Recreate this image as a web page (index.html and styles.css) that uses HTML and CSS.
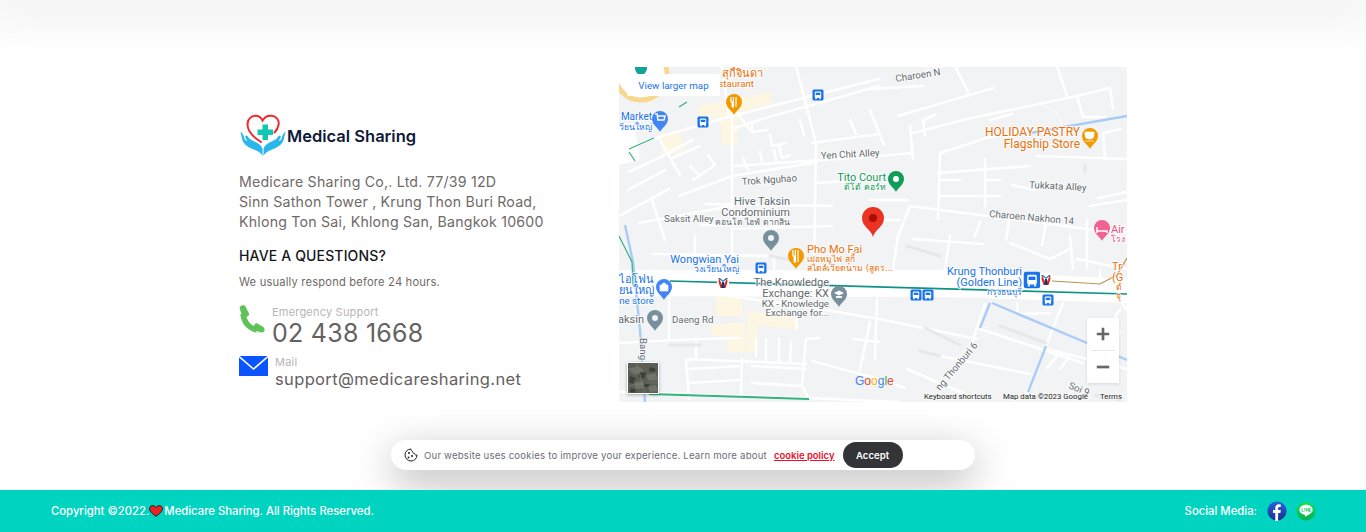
FILE: index.html
```html
<!DOCTYPE html>
<html lang="en">
<head>
<meta charset="utf-8">
<title>Medical Sharing</title>
<link rel="stylesheet" href="styles.css">
</head>
<body>
<div class="top-shadow"></div>
<main class="contact">
  <section class="info">
    <div class="brand">
      <svg class="brand-logo" viewBox="0 0 48 46" aria-hidden="true">
        <path d="M22 30C14 25 8.500 19 8.500 12.500 8.500 7 12 3.800 16.500 3.800c3 0 5.500 1.700 7 4.700 2-3.200 5-5.200 9-4.700 5 .6 8 4.200 7 9.200-.5 3-2 5.500-4 7.500" fill="none" stroke="#ee2a2f" stroke-width="2" stroke-linecap="round"/>
        <path d="M23.500 12.500h5.500v5h5v5.500h-5v5h-5.500v-5h-5v-5.500h5z" fill="#12c6b4"/>
        <path d="M1.500 20l1.500 6.500c1 5 5 8 9.500 10 5 2 9 3.500 11 7.500v-7c-1-4-5-6-9-8-3-1-5-3-6-5-1-1.500-3 0-2 2l2 3-2.500-1c-1-3-1.500-6-4.500-8.500z" fill="#29b6ea"/>
        <path d="M46.500 20l-1.500 6.500c-1 5-5 8-9.500 10-5 2-9 3.500-11 7.500v-7c1-4 5-6 9-8 3-1 5-3 6-5 1-1.500 3 0 2 2l-2 3 2.500-1c1-3 1.500-6 4.500-8.500z" fill="#29b6ea"/>
      </svg>
      <span class="brand-name">Medical Sharing</span>
    </div>
    <p class="address">Medicare Sharing Co,. Ltd. 77/39 12D<br>Sinn Sathon Tower , Krung Thon Buri Road,<br>Khlong Ton Sai, Khlong San, Bangkok 10600</p>
    <h2 class="question">HAVE A QUESTIONS?</h2>
    <p class="respond">We usually respond before 24 hours.</p>
    <div class="contact-row phone-row">
      <svg class="phone-icon" viewBox="0 0 26 28" aria-hidden="true">
        <path d="M4 9C5 17 10 23 18 25" fill="none" stroke="#5fc258" stroke-width="5.500"/>
        <path d="M1 4c-1-1.500 0-3 2-3.500 1.500-.5 3-.5 3.500 1l3.500 7c.5 1.500-.5 2.500-2 3l-3 1.500C3 11 1.500 7 1 4z" fill="#5fc258"/>
        <path d="M23.500 27.500c1.500-.5 2.500-2 2-3.500-.3-1.200-1-2-2-2.500l-5-3c-1.500-.7-2.500 0-3 1.500l-1.500 3.500c3 2.500 6 4 9.500 4z" fill="#5fc258"/>
      </svg>
      <div class="contact-text">
        <div class="contact-label">Emergency Support</div>
        <div class="contact-phone">02 438 1668</div>
      </div>
    </div>
    <div class="contact-row mail-row">
      <svg class="mail-icon" viewBox="0 0 29 20" aria-hidden="true">
        <rect width="29" height="20" fill="#0a55ff"/>
        <path d="M0 .5L14.500 13 29 .5" fill="none" stroke="#fff" stroke-width="1.600"/>
      </svg>
      <div class="contact-text">
        <div class="contact-label">Mail</div>
        <div class="contact-mail">support@medicaresharing.net</div>
      </div>
    </div>
  </section>

  <div class="map">
    <svg class="map-canvas" viewBox="619 67 508 335" aria-label="Map">
      <defs>
        <path id="pin" d="M0 0C-1.500-4-8-7-8-13a8 8 0 0 1 16 0C8-7 1.500-4 0 0Z"/>
        <g id="bus">
          <rect x="-5.500" y="-5.500" width="11" height="11" rx="1.500" fill="#1a73e8"/>
          <rect x="-3.200" y="-3.500" width="6.400" height="6.500" rx="1" fill="#fff"/>
          <rect x="-2.300" y="-2.300" width="4.600" height="2.300" fill="#1a73e8"/>
          <rect x="-2.800" y="3" width="1.500" height="1.200" fill="#fff"/>
          <rect x="1.300" y="3" width="1.500" height="1.200" fill="#fff"/>
        </g>
        <g id="metro">
          <rect x="-6" y="-6" width="12" height="12" fill="#fff"/>
          <path d="M-5-4L0 0 5-4 3-4 0-1.500-3-4Z" fill="#1f7dc4"/>
          <path d="M-4-4.500L-1 3-1 6-2.500 6-4.500 0ZM4-4.500L1 3 1 6 2.500 6 4.500 0Z" fill="#d93025"/>
          <path d="M-1 0L1 0 1.500 6-1.500 6Z" fill="#16356b"/>
        </g>
      </defs>
      <rect x="619" y="67" width="508" height="335" fill="#f1f3f4"/>

      <g fill="#fdf6e3">
        <path d="M697 106L770 92 773 103 739 112 737 146 722 144 720 116 700 122Z"/>
        <path d="M658 138L680 132 686 150 664 156Z"/>
        <path d="M716 296H742V316H716ZM712 324H727V336H712ZM727 323H745V352H727Z"/>
        <path d="M747 311L796 316 796 329 758 326 757 352 746 352Z"/>
      </g>
      <circle cx="641" cy="74" r="27" fill="#fff"/>
      <circle cx="641" cy="74" r="26" fill="none" stroke="#f8d88e" stroke-width="5"/>
      <path d="M619 123H634L640 160 619 165Z" fill="#fff"/>

      <path d="M619 270H950L1127 279V303L950 297 619 296Z" fill="#fff"/>

      <g class="road">
        <path d="M619 152L662 136 732 116 819 94 879 79M732 129L772 116 819 103 879 86M732 109V270M796 66L816 143 814 270"/>
        <path d="M722 67L729 116M737 113L750 130M629 172L665 155 692 140M628 190L665 170M660 140L680 175M679 196L732 176 812 163M735 166L879 156 913 153"/>
        <path d="M619 216L669 189M639 223L732 206M706 204L832 206M732 229L832 226M812 143L879 134M779 146L782 158 790 155M816 183L879 179M672 158L700 146M693 180L715 165 708 155"/>
        <path d="M752 122L752 132 768 130M770 135L772 146 786 143M800 120L804 135M700 176L690 166M748 170L743 158M762 162L760 152M776 160L774 150M652 200L665 240M700 225H732M780 214V226M652 254L772 256M774 256V269M695 236V254"/>
        <path d="M870 89L923 86M898 116L993 88M913 133L967 119 1077 96 1110 88M910 126L913 159M925 135L923 120 935 115M955 66L968 92M870 110L884 145M850 120L856 134"/>
        <path d="M940 153L987 138 1030 129M940 153L938 219M938 173L1030 166M985 159V206M940 180H960M940 196H1000M985 180H1000M990 120L1012 114"/>
        <path d="M910 206L1087 229 1127 232M1037 156L1127 159M1105 159L1103 133 1120 129M1110 88L1113 109M1057 66L1067 96M1077 96L1083 117H1105M1087 220V268M1098 198L1127 192M1090 206L1127 200"/>
        <path d="M1012 185L1035 190M1010 216L1006 240M1046 222L1042 245M980 222L975 236M910 206L898 236 893 269M950 236L945 269M870 220H900M913 239L983 244M1010 243L1050 259 1070 249M1070 236L1073 269M1077 259L1127 269M870 200H908"/>
        <path d="M669 296V339M729 296L796 305 879 319 977 339M619 343L696 339 739 338M696 339V359M686 359L806 364M686 359L689 399M742 359L741 396M756 339V356M766 339V362M779 339V362M791 342L790 362M806 339L802 386 809 399M806 339L819 338M796 316L797 329M812 361L879 379 905 388"/>
        <path d="M689 369L739 366M752 366L806 369M689 383L739 380M752 383L802 386M853 339L879 342M870 322L860 370"/>
        <path d="M980 329L1083 363M972 343L985 304M877 299L875 359M940 356L1030 374M907 369L963 393M1063 303L1027 393M1047 349L1127 369M1047 368L1060 353M1060 369L1070 356M1017 303L1018 314 1050 313"/>
        <path d="M619 392L809 398 900 402M1100 270V290M1120 300L1127 310M1120 310Q1110 320 1120 332"/>
      </g>
      <g class="road-soft">
        <path d="M907 246L940 256M1000 326L1046 343M920 351L940 356M925 328L960 345M1085 165V172M1095 395L1120 400M670 345H700M770 256L800 262"/>
      </g>

      <path d="M625 225L633 262 640 330 645 402" class="water"/>
      <path d="M992 303L1087 343 1127 360M990 303L980 328M1046 346L1028 392M1030 133L1127 116" class="water"/>
      <path d="M629 149L654 138M629 152L635 161M679 107L687 102M619 236L632 262 633 285" class="green-line"/>
      <path d="M649 394L809 399" class="green-line thick"/>
      <path d="M670 281L1127 294" class="teal-line"/>
      <path d="M1052 281L1100 284 1117 275 1127 258" class="gold-line"/>
      <path d="M1042 105L1056 112 1062 124" class="white-thin"/>

      <g class="label">
        <text x="821" y="159" transform="rotate(-3 821 159)">Yen Chit Alley</text>
        <text x="742" y="185" transform="rotate(-4 742 185)">Trok Nguhao</text>
        <text x="790" y="205" text-anchor="end" class="lg">Hive Taksin</text>
        <text x="790" y="216" text-anchor="end" class="lg">Condominium</text>
        <text x="790" y="225" text-anchor="end" class="sm">คอนโด ไฮฟ์ ตากสิน</text>
        <text x="664" y="222">Saksit Alley</text>
        <text x="896" y="82" transform="rotate(-9 896 82)">Charoen N</text>
        <text x="1029" y="188" transform="rotate(3 1029 188)">Tukkata Alley</text>
        <text x="989" y="217" transform="rotate(5 989 217)">Charoen Nakhon 14</text>
        <text x="829" y="286" text-anchor="end" class="lg">The Knowledge</text>
        <text x="829" y="297" text-anchor="end" class="lg">Exchange: KX</text>
        <text x="829" y="307" text-anchor="end">KX - Knowledge</text>
        <text x="829" y="316" text-anchor="end">Exchange for...</text>
        <text x="644" y="323" text-anchor="end" class="lg">aksin</text>
        <text x="672" y="323">Daeng Rd</text>
        <text x="640" y="338" transform="rotate(90 640 338)">Bang</text>
        <text x="940" y="391" transform="rotate(-50 940 391)">ng Thonburi 6</text>
        <text x="1068" y="388" transform="rotate(22 1068 388)">Soi 9</text>
      </g>
      <g class="label orange">
        <text x="722" y="77" class="lg">สุกี้จินดา</text>
        <text x="754" y="87" text-anchor="end">estaurant</text>
        <text x="1080" y="136" text-anchor="end" class="xl">HOLIDAY PASTRY</text>
        <text x="1080" y="148" text-anchor="end" class="xl">Flagship Store</text>
        <text x="807" y="253" class="lg">Pho Mo Fai</text>
        <text x="807" y="262" class="sm">เฝอหมูไฟ สุกี้</text>
        <text x="807" y="271" class="sm">สไตล์เวียดนาม (สูตร...</text>
        <text x="1112" y="270" class="lg">Tr</text>
        <text x="1112" y="281" class="lg">(G</text>
        <text x="1116" y="290" class="sm">ต้</text>
        <text x="1116" y="299" class="sm">จุ</text>
      </g>
      <g class="label blue">
        <text x="652" y="120" text-anchor="end" class="md">Market</text>
        <text x="652" y="130" text-anchor="end" class="sm">เวียนใหญ่</text>
        <text x="739" y="263" text-anchor="end" class="lg">Wongwian Yai</text>
        <text x="739" y="272" text-anchor="end" class="sm">วงเวียนใหญ่</text>
        <text x="654" y="283" text-anchor="end" class="lg">ไอโฟน</text>
        <text x="654" y="294" text-anchor="end" class="lg">ยนใหญ่</text>
        <text x="654" y="304" text-anchor="end">one store</text>
        <text x="1022" y="275" text-anchor="end" class="lg">Krung Thonburi</text>
        <text x="1022" y="286" text-anchor="end" class="lg">(Golden Line)</text>
        <text x="1022" y="295" text-anchor="end" class="sm">กรุงธนบุรี</text>
      </g>
      <g class="label green">
        <text x="886" y="181" text-anchor="end" class="lg">Tito Court</text>
        <text x="886" y="190" text-anchor="end" class="sm">ตีโต้ คอร์ท</text>
      </g>
      <g class="label pink">
        <text x="1111" y="233" class="lg">Air</text>
        <text x="1111" y="242" class="sm">โรง</text>
      </g>

      <use href="#pin" transform="translate(641 78) scale(.75)" fill="#12a594"/>
      <use href="#pin" x="734" y="115" fill="#f29900"/>
      <path d="M731 97v5h1.200v5h1.200V97M736 97v10" fill="none" stroke="#fff" stroke-width="1.200"/>
      <use href="#pin" x="660" y="132" fill="#4285f4"/>
      <path d="M655 114h2l1 6h6l1-4h-7" fill="none" stroke="#fff" stroke-width="1.400"/>
      <use href="#pin" x="1090" y="149" fill="#f29900"/>
      <path d="M1085 132h9v3a4 4 0 0 1-4 4h-1a4 4 0 0 1-4-4zM1085 141h9" fill="#fff" stroke="#fff" stroke-width=".6"/>
      <use href="#pin" x="896" y="192" fill="#0f9d58"/>
      <circle cx="896" cy="179" r="3" fill="#fff"/>
      <use href="#pin" x="771" y="251" fill="#78909c"/>
      <circle cx="771" cy="238" r="3" fill="#f1f3f4"/>
      <use href="#pin" x="796" y="269" fill="#f29900"/>
      <path d="M793 250v6h1.200v6h1.200V250M798 250v12" fill="none" stroke="#fff" stroke-width="1.200"/>
      <use href="#pin" x="839" y="307" fill="#78909c"/>
      <path d="M834 293l5-2.500 5 2.500-5 2.500zM836 296v2h6v-2" fill="#fff"/>
      <use href="#pin" x="664" y="300" fill="#4285f4"/>
      <path d="M660 285h8v6h-8zM662 285a2 2 0 0 1 4 0" fill="#fff" stroke="#fff" stroke-width=".6"/>
      <use href="#pin" x="655" y="331" fill="#78909c"/>
      <circle cx="655" cy="318" r="3" fill="#f1f3f4"/>
      <use href="#pin" x="1102" y="241" fill="#f06292"/>
      <path d="M1097 227v6M1097 231h10v2" fill="none" stroke="#fff" stroke-width="1.500"/>

      <use href="#bus" x="818" y="95"/>
      <use href="#bus" x="703" y="122"/>
      <use href="#bus" x="761" y="268"/>
      <use href="#bus" x="916" y="295"/>
      <use href="#bus" x="928" y="295"/>
      <use href="#bus" x="1048" y="300"/>
      <use href="#bus" transform="translate(1032 280) scale(1.500)"/>
      <use href="#metro" x="723" y="282"/>
      <use href="#metro" x="1046" y="279"/>

      <g class="marker">
        <path d="M873 237C871 229 862 227 862 218a11 11 0 0 1 22 0C884 227 875 229 873 237Z" fill="#ea3323"/>
        <circle cx="873" cy="218" r="4" fill="#a80f0a"/>
      </g>

      <text x="855" y="385" class="google"><tspan fill="#4285f4">G</tspan><tspan fill="#ea4335">o</tspan><tspan fill="#fbbc05">o</tspan><tspan fill="#4285f4">g</tspan><tspan fill="#34a853">l</tspan><tspan fill="#ea4335">e</tspan></text>
      <g class="attribution">
        <text x="924" y="399">Keyboard shortcuts</text>
        <text x="1003" y="399">Map data ©2023 Google</text>
        <text x="1100" y="399">Terms</text>
      </g>
    </svg>

    <a class="map-link">View larger map</a>
    <div class="map-thumb">
      <svg viewBox="0 0 30 30" aria-hidden="true">
        <rect width="30" height="30" fill="#5a5e55"/>
        <path d="M0 6L10 3 16 8 7 12ZM18 12L28 10 30 17 21 18ZM6 20L14 18 16 25 8 26ZM20 24L28 22 30 28 22 29Z" fill="#70746a"/>
        <path d="M2 13L8 15 5 21 1 19ZM12 9L18 10 16 16 11 14ZM22 4L28 6 26 9 21 8ZM16 20L22 20 20 24 16 24ZM3 25L8 27 6 30 2 29Z" fill="#3c4039"/>
        <path d="M0 23L30 19M9 0L17 30" stroke="#7f8277" stroke-width=".6"/>
      </svg>
    </div>
    <div class="zoom-controls">
      <button class="zoom-btn">
        <svg viewBox="0 0 18 18" aria-hidden="true"><path d="M2 9H16M9 2V16" stroke="#666" stroke-width="3"/></svg>
      </button>
      <div class="zoom-divider"></div>
      <button class="zoom-btn">
        <svg viewBox="0 0 18 18" aria-hidden="true"><path d="M2 9H16" stroke="#666" stroke-width="3"/></svg>
      </button>
    </div>
  </div>
</main>

<footer class="footer">
  <div class="copyright">
    <span>Copyright ©2022.</span>
    <svg class="heart" viewBox="0 0 14 12" aria-hidden="true">
      <path d="M7 11.300C3 8.500.6 6.300.6 3.600.6 1.800 2 .6 3.600.6 5 .6 6.300 1.400 7 2.800 7.700 1.400 9 .6 10.400.6 12 .6 13.400 1.800 13.400 3.600 13.400 6.300 11 8.500 7 11.300Z" fill="#ec2027" stroke="#1a1a1a"/>
    </svg>
    <span>Medicare Sharing. All Rights Reserved.</span>
  </div>
  <div class="social">
    <span>Social Media:</span>
    <svg class="social-icon" viewBox="0 0 20 20" aria-label="Facebook">
      <defs><linearGradient id="fb" x1="0" y1="0" x2="0" y2="1"><stop offset="0" stop-color="#2a62dc"/><stop offset="1" stop-color="#1b2f8f"/></linearGradient></defs>
      <circle cx="10" cy="10" r="9.500" fill="url(#fb)"/>
      <path d="M8.300 20V12H6V9h2.300V7c0-2.500 1.400-3.700 3.500-3.700.8 0 1.500.1 2 .2v2.600h-1.300c-1.100 0-1.400.6-1.400 1.400V9h2.700l-.4 3h-2.300v8z" fill="#fff"/>
    </svg>
    <svg class="social-icon line" viewBox="0 0 20 20" aria-label="LINE">
      <defs><linearGradient id="ln" x1="0" y1="0" x2="0" y2="1"><stop offset="0" stop-color="#14e06a"/><stop offset="1" stop-color="#05b04a"/></linearGradient></defs>
      <circle cx="10" cy="10" r="9.500" fill="url(#ln)"/>
      <path d="M10 3.800c-3.700 0-6.600 2.200-6.600 5 0 2.500 2.200 4.500 5.200 4.900.6.100.5.500.4 1.400 0 .4.300.5.700.3 1.700-1 5.900-3.400 6.600-5 .2-.5.300-1 .3-1.600 0-2.800-2.900-5-6.600-5z" fill="#fff"/>
      <path d="M6 7v3.500h1.500M8.800 7v3.500M10.300 10.500V7l2 3.500V7M15 7h-1.600v3.500H15M13.400 8.800H15" fill="none" stroke="#0fc75a" stroke-width=".7"/>
    </svg>
  </div>
</footer>

<div class="cookie">
  <svg class="cookie-icon" viewBox="0 0 14 14" aria-hidden="true">
    <path d="M7 1a6 6 0 1 0 6 6c-1.200.3-2.300-.3-2.500-1.500C9.300 5.500 8.500 4.700 8.500 3.500 7.500 3.200 7 2.200 7 1Z" fill="#fff" stroke="#222" stroke-width="1"/>
    <circle cx="5" cy="5" r="1" fill="#222"/><circle cx="8" cy="8" r="1" fill="#222"/><circle cx="4.500" cy="9.500" r="1" fill="#222"/>
  </svg>
  <span class="cookie-text">Our website uses cookies to improve your experience. Learn more about</span>
  <a class="cookie-link">cookie policy</a>
  <button class="cookie-accept">Accept</button>
</div>
</body>
</html>
```

FILE: styles.css
```css
* { box-sizing: border-box; }
html, body { margin: 0; padding: 0; }
body {
  height: 532px;
  overflow: hidden;
  background: #fff;
  font-family: Inter, "Liberation Sans", sans-serif;
  color: #6b6b6b;
}
.top-shadow {
  height: 0;
  box-shadow: 0 0 50px 16px rgba(0, 0, 0, .08);
}
.contact {
  display: flex;
  height: 490px;
  padding: 67px 0 0 239px;
}
.info { width: 380px; padding-top: 45px; }
.brand { display: flex; align-items: center; height: 46px; }
.brand-logo { width: 48px; height: 46px; flex: none; }
.brand-name { margin-top: 2px; font-size: 16.500px; font-weight: 600; color: #10193a; }
.address { margin: 14px 0 0; font-size: 14.200px; line-height: 20px; letter-spacing: .2px; color: #6f6a68; }
.question { margin: 15px 0 0; font-size: 14px; line-height: 18px; font-weight: 500; letter-spacing: .15px; color: #14161c; }
.respond { margin: 10px 0 0; font-size: 11.200px; line-height: 14px; letter-spacing: .17px; color: #6f6a68; }
.contact-row { display: flex; }
.phone-row { margin-top: 16px; }
.mail-row { margin-top: 8px; }
.phone-icon { width: 26px; height: 28px; margin-right: 7px; flex: none; }
.mail-icon { width: 29px; height: 20px; margin-right: 7px; flex: none; }
.phone-row .contact-text { padding-top: 1px; }
.contact-label { font-size: 11px; line-height: 12px; letter-spacing: .2px; color: #b9b3b8; }
.contact-phone { font-size: 25px; line-height: 30px; color: #65615f; letter-spacing: .25px; }
.contact-mail { font-size: 16.500px; line-height: 22px; color: #65615f; letter-spacing: .36px; }

.map { position: relative; width: 508px; height: 335px; flex: none; overflow: hidden; }
.map-canvas { display: block; width: 508px; height: 335px; font-family: Roboto, "Noto Sans", sans-serif; }
.map-link {
  position: absolute; left: 8px; top: 7px;
  width: 93px; height: 22px;
  background: #fff; border-radius: 2px;
  font: 9.800px/24px Roboto, sans-serif;
  color: #1a73e8; text-align: center;
}
.map-thumb {
  position: absolute; left: 8px; top: 295px;
  width: 32px; height: 32px;
  border: 1px solid #fff;
  box-shadow: 0 1px 3px rgba(0, 0, 0, .3);
}
.map-thumb svg { display: block; width: 100%; height: 100%; }
.zoom-controls {
  position: absolute; left: 468px; top: 251px;
  width: 32px; height: 65px;
  display: flex; flex-direction: column;
  background: #fff;
  box-shadow: 0 1px 3px rgba(0, 0, 0, .12);
}
.zoom-btn { flex: 1; display: flex; align-items: center; justify-content: center; border: 0; padding: 0; background: none; }
.zoom-btn svg { width: 16px; height: 16px; }
.zoom-divider { height: 1px; margin: 0 4px; background: #e6e6e6; }

.road, .road-soft { fill: none; stroke: #fff; stroke-linecap: round; stroke-linejoin: round; }
.road { stroke-width: 2.600; }
.road-soft { stroke: #e6e8eb; stroke-width: 3; }
.water { fill: none; stroke: #a8ccf8; stroke-width: 2.400; }
.green-line { fill: none; stroke: #34b37c; stroke-width: 1.200; }
.green-line.thick { stroke-width: 2; }
.teal-line { fill: none; stroke: #0f9188; stroke-width: 1.600; }
.gold-line { fill: none; stroke: #b8934a; stroke-width: 1.200; }
.white-thin { fill: none; stroke: #fff; stroke-width: 1; }

.label text {
  font-size: 9.700px;
  fill: #646a70;
  stroke: #fff; stroke-width: 2; stroke-opacity: .75;
  paint-order: stroke;
}
.label text.md { font-size: 10px; }
.label text.lg { font-size: 11px; }
.label text.xl { font-size: 12px; }
.label text.sm { font-size: 8.500px; font-family: "DejaVu Sans", "Noto Sans", sans-serif; }
.label.orange text { fill: #e8710a; }
.label.blue text { fill: #1a73e8; }
.label.green text { fill: #0f9d58; }
.label.pink text { fill: #e84f7f; }
.google { font: 500 12px "Liberation Sans", sans-serif; }
.attribution text { font-size: 7.800px; fill: #222; stroke: #fff; stroke-width: 1.500; stroke-opacity: .6; paint-order: stroke; }

.footer {
  position: relative;
  z-index: 2;
  display: flex; align-items: center; justify-content: space-between;
  height: 42px;
  padding: 0 50px 0 51px;
  background: #00d4c0;
  color: #fff;
  font-size: 11.300px;
  font-weight: 500;
}
.copyright { display: flex; align-items: center; }
.heart { width: 14px; height: 12px; margin: 0 1px 0 0; }
.social { display: flex; align-items: center; gap: 10px; }
.social-icon { width: 20px; height: 20px; }
.social-icon.line { margin-left: -1px; }

.cookie {
  position: absolute; left: 391px; top: 440px;
  width: 584px; height: 30px;
  display: flex; align-items: center;
  padding: 0 0 0 13px;
  background: #fff;
  border-radius: 15px;
  box-shadow: 0 12px 40px rgba(0, 0, 0, .3);
  font-size: 9.600px;
  letter-spacing: .2px;
}
.cookie-icon { width: 14px; height: 14px; margin-right: 6px; flex: none; }
.cookie-text { color: #6c6c78; }
.cookie-link { margin-left: 7px; color: #e8112d; font-size: 9.500px; font-weight: 600; letter-spacing: 0; text-decoration: underline; }
.cookie-accept {
  margin-left: 8px;
  width: 60px; height: 26px;
  border: 0; border-radius: 13px;
  background: #333438; color: #fff;
  font: 600 9.600px Inter, sans-serif;
}
```
